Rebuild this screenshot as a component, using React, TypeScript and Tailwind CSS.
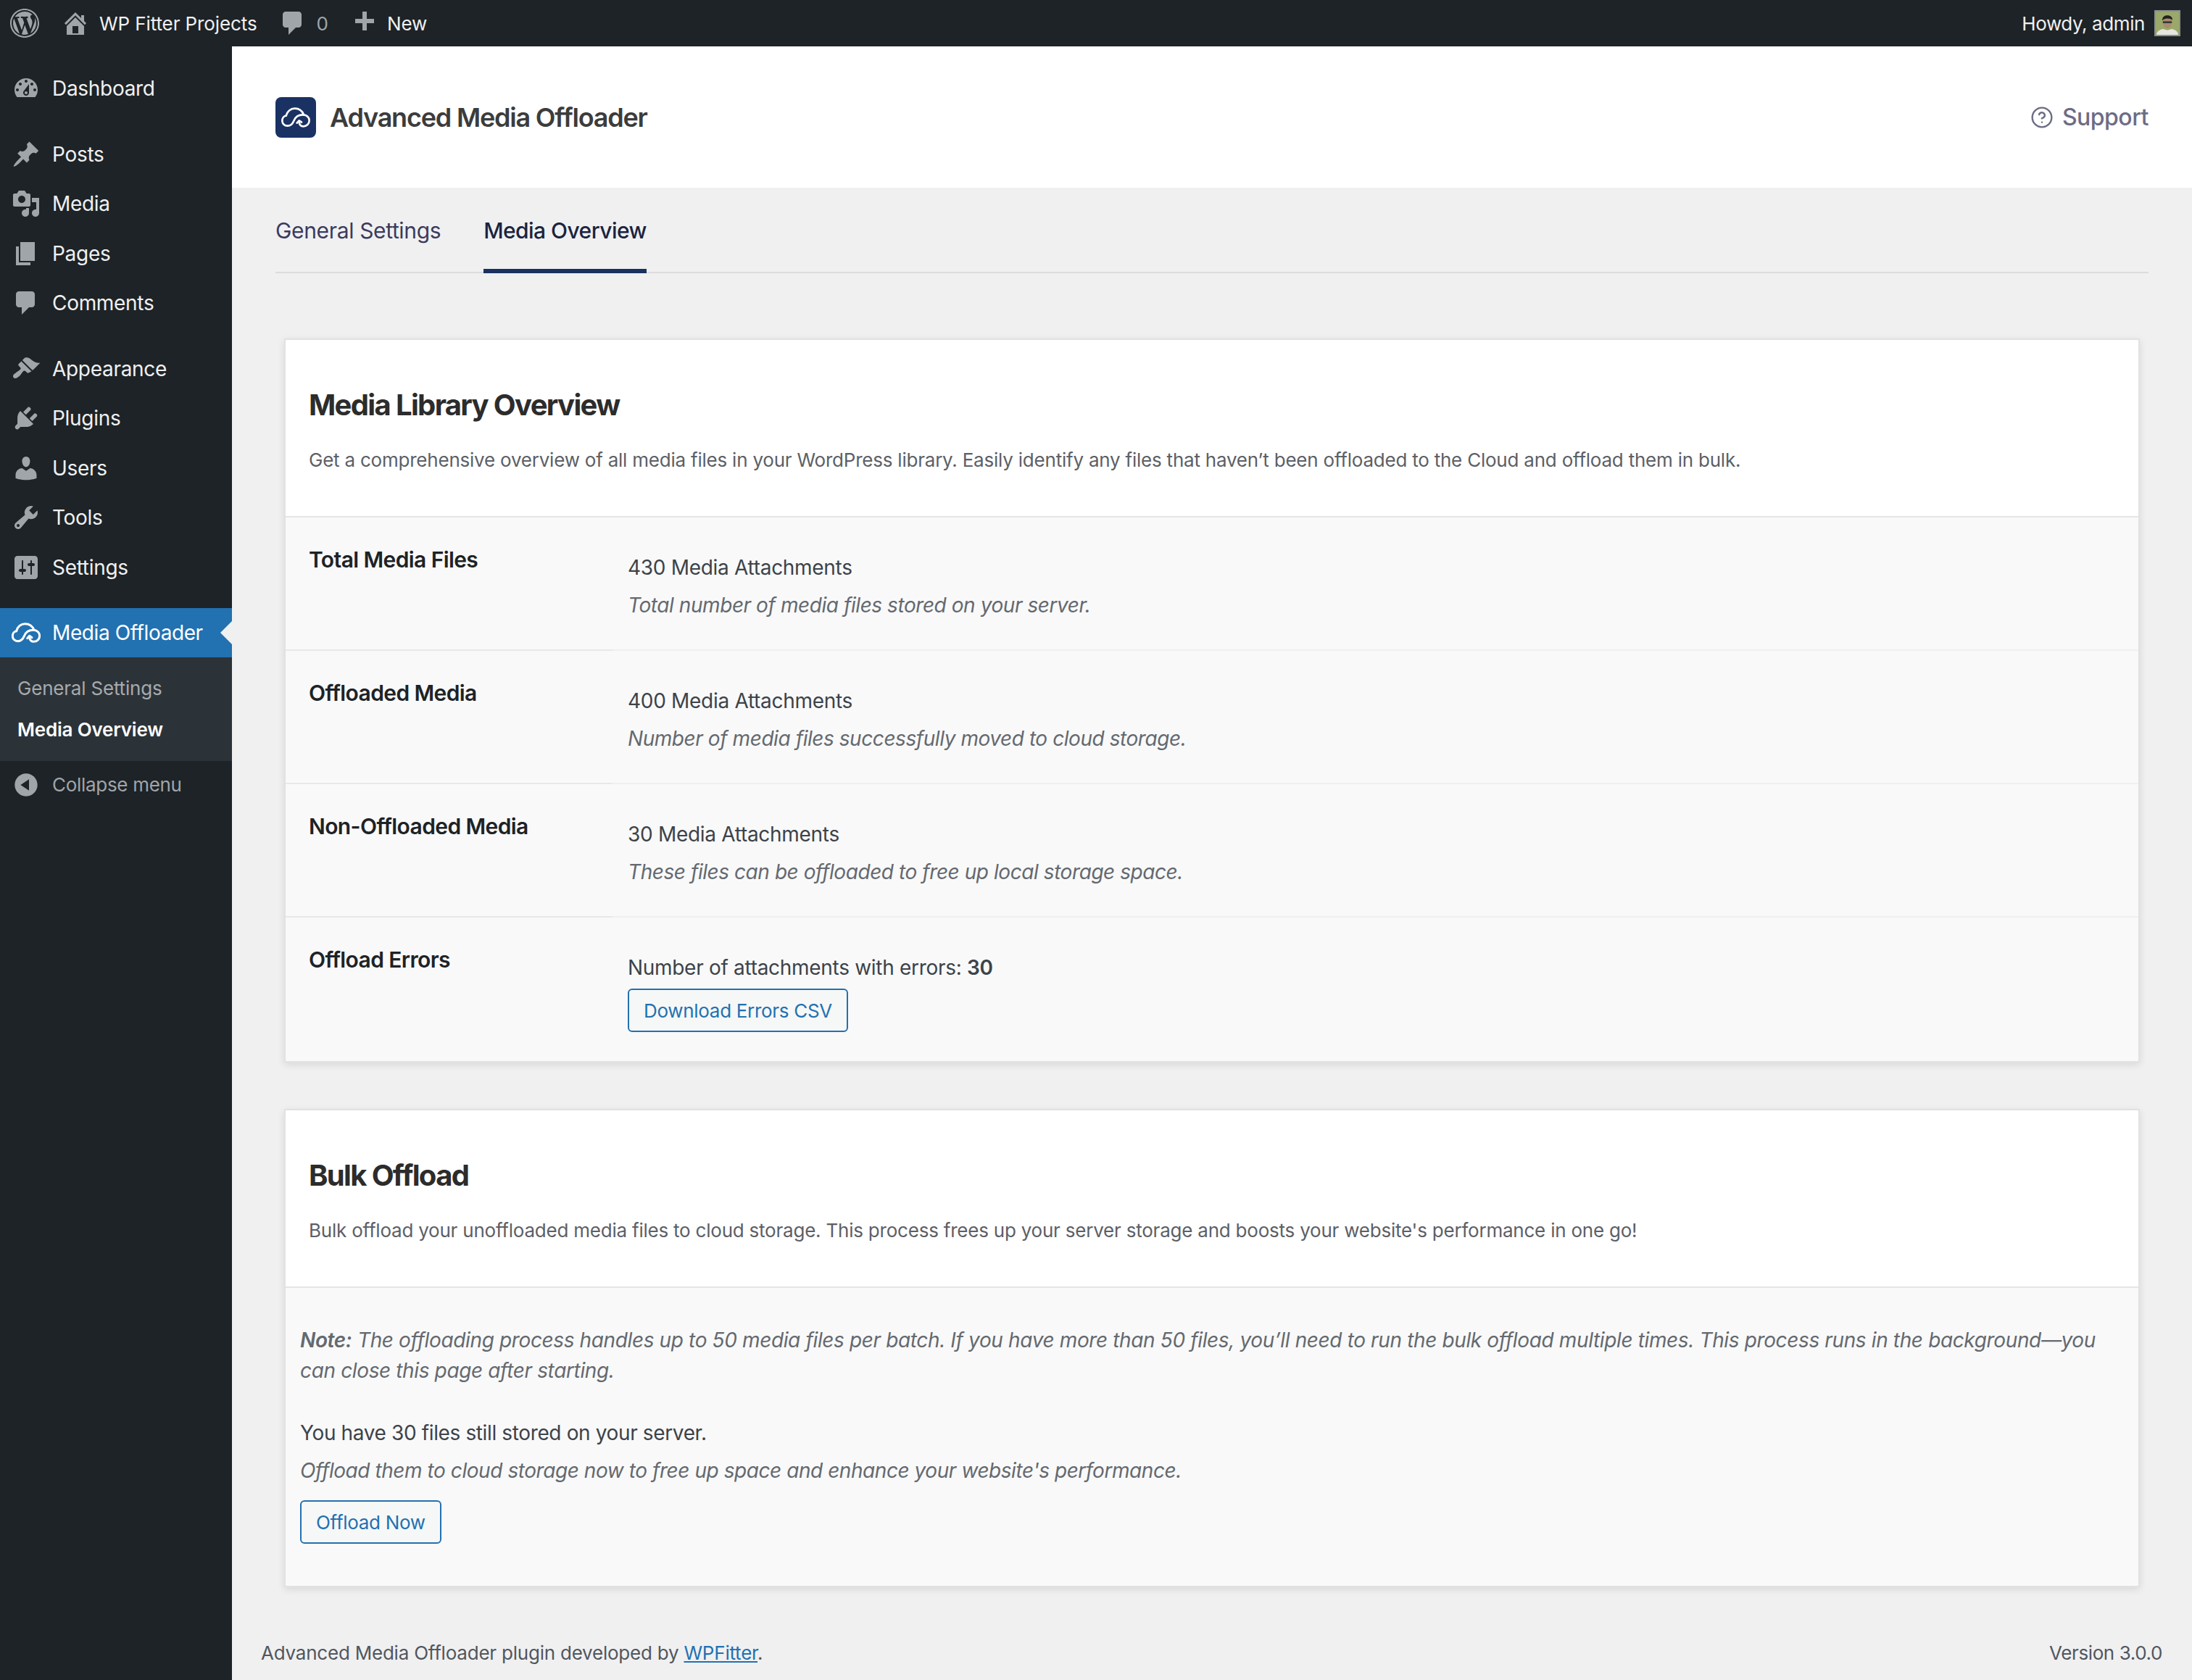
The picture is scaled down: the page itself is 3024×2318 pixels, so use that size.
import React from 'react';
import { CircleHelp } from 'lucide-react';

const paths: Record<string, string> = {
  wordpress: 'M20 10c0-5.52-4.48-10-10-10S0 4.48 0 10s4.48 10 10 10 10-4.48 10-10zM10 1.01c4.96 0 8.99 4.03 8.99 8.99s-4.03 8.99-8.99 8.99S1.01 14.96 1.01 10 5.04 1.01 10 1.01zM8.01 14.82L4.96 6.61c.49-.03 1.05-.08 1.05-.08.43-.05.38-1.01-.06-.99 0 0-1.29.1-2.13.1-.15 0-.33 0-.52-.01 1.44-2.17 3.9-3.6 6.7-3.6 2.09 0 3.99.79 5.41 2.09-.6-.08-1.45.35-1.45 1.42 0 .66.38 1.22.79 1.88.31.54.5 1.22.5 2.21 0 1.34-1.27 4.48-1.27 4.48l-2.71-7.5c.48-.03.75-.16.75-.16.43-.04.38-1.1-.05-1.08 0 0-1.3.11-2.14.11-.78 0-2.11-.11-2.11-.11-.43-.02-.48 1.06-.05 1.08l.84.08 1.12 3.04zm6.02 2.15L16.64 10s.67-1.69.39-3.81c.63 1.14.94 2.42.94 3.81 0 2.96-1.56 5.58-3.94 6.97zM2.68 6.77L6.5 17.25c-2.67-1.3-4.47-4.08-4.47-7.25 0-1.16.2-2.23.65-3.23zm7.45 4.53l2.29 6.25c-.75.27-1.57.42-2.42.42-.72 0-1.41-.11-2.06-.3z',
  home: 'M16 8.5l1.53 1.53-1.06 1.06L10 4.62l-6.47 6.47-1.06-1.06L10 2.5l4 4v-2h2v4zm-6-2.46l6 5.99V18H4v-5.97zM12 17v-5H8v5h4z',
  comment: 'M5 2h9c1.1 0 2 .9 2 2v7c0 1.1-.9 2-2 2h-2l-5 5v-5H5c-1.1 0-2-.9-2-2V4c0-1.1.9-2 2-2z',
  plus: 'M17 7v3h-5v5H9v-5H4V7h5V2h3v5h5z',
  dashboard: 'M3.76 16h12.48c1.1-1.37 1.76-3.11 1.76-5 0-4.42-3.58-8-8-8s-8 3.58-8 8c0 1.89.66 3.63 1.76 5zM10 4c.55 0 1 .45 1 1s-.45 1-1 1-1-.45-1-1 .45-1 1-1zM6 6c.55 0 1 .45 1 1s-.45 1-1 1-1-.45-1-1 .45-1 1-1zm8 0c.55 0 1 .45 1 1s-.45 1-1 1-1-.45-1-1 .45-1 1-1zm-5.37 5.55L12 7v6c0 1.1-.9 2-2 2s-2-.9-2-2c0-.57.24-1.08.63-1.45zM4 10c.55 0 1 .45 1 1s-.45 1-1 1-1-.45-1-1 .45-1 1-1zm12 0c.55 0 1 .45 1 1s-.45 1-1 1-1-.45-1-1 .45-1 1-1zm-5 3c0-.55-.45-1-1-1s-1 .45-1 1 .45 1 1 1 1-.45 1-1z',
  post: 'M10.44 3.02l1.82-1.82 6.36 6.35-1.83 1.82c-1.05-.68-2.48-.57-3.41.36l-.75.75c-.92.93-1.04 2.35-.35 3.41l-1.83 1.82-2.41-2.41-2.8 2.79c-.42.42-3.38 2.71-3.8 2.29s1.86-3.39 2.28-3.81l2.79-2.79L4.1 9.36l1.83-1.82c1.05.69 2.48.57 3.4-.36l.75-.75c.93-.92 1.05-2.35.36-3.41z',
  media: 'M13 11V4c0-.55-.45-1-1-1h-1.67L9 1H5L3.67 3H2c-.55 0-1 .45-1 1v7c0 .55.45 1 1 1h10c.55 0 1-.45 1-1zM7 4.5c1.38 0 2.5 1.12 2.5 2.5S8.38 9.5 7 9.5 4.5 8.38 4.5 7 5.62 4.5 7 4.5zM14 6h5v10.5c0 1.38-1.12 2.5-2.5 2.5S14 17.88 14 16.5s1.12-2.5 2.5-2.5c.17 0 .34.02.5.05V9h-3V6zm-4 8.05V13h2v3.5c0 1.38-1.12 2.5-2.5 2.5S7 17.88 7 16.5 8.12 14 9.5 14c.17 0 .34.02.5.05z',
  page: 'M6 15V2h10v13H6zm-1 1h8v2H3V5h2v11z',
  appearance: 'M14.48 11.06L7.41 3.99l1.5-1.5c.5-.56 2.3-.47 3.51.32 1.21.8 1.43 1.28 2.91 2.1 1.18.64 2.45 1.26 4.45.85zm-.71.71L6.7 4.7 4.93 6.47c-.39.39-.39 1.02 0 1.41l1.06 1.06c.39.39.39 1.03 0 1.42-.6.6-1.43 1.11-2.21 1.69-.35.26-.7.53-1.01.84C1.43 13.23.4 15.1 1.4 16.1c.99 1 2.87-.04 4.2-1.38.31-.31.58-.66.84-1.01.58-.78 1.09-1.61 1.69-2.21.39-.39 1.02-.39 1.41 0l1.06 1.06c.39.39 1.02.39 1.41 0z',
  plugins: 'M13.11 4.36L9.87 7.6 8 5.73l3.24-3.24c.35-.34 1.05-.2 1.56.32.52.51.66 1.21.31 1.55zm-8 1.77l.91-1.12 9.01 9.01-1.19.84c-.71.71-2.63 1.16-3.82 1.16H6.14L4.9 17.26c-.59.59-1.54.59-2.12 0-.59-.58-.59-1.53 0-2.12l1.24-1.24v-3.88c0-1.13.4-3.19 1.09-3.89zm7.26 3.97l3.24-3.24c.34-.35 1.04-.21 1.55.31.52.51.66 1.21.31 1.55l-3.24 3.25z',
  users: 'M10 9.25c-2.27 0-2.73-3.44-2.73-3.44C7 4.02 7.82 2 9.97 2c2.16 0 2.98 2.02 2.71 3.81 0 0-.41 3.44-2.68 3.44zm0 2.57L12.72 10c2.39 0 4.52 2.33 4.52 4.53v2.49s-3.65 1.13-7.24 1.13c-3.65 0-7.24-1.13-7.24-1.13v-2.49c0-2.25 1.94-4.48 4.47-4.48z',
  tools: 'M16.68 9.77c-1.34 1.34-3.3 1.67-4.95.99l-5.41 6.52c-.99.99-2.59.99-3.58 0s-.99-2.59 0-3.57l6.52-5.42c-.68-1.65-.35-3.61.99-4.95 1.28-1.28 3.12-1.62 4.72-1.06l-2.89 2.89 2.82 2.82 2.86-2.87c.53 1.58.18 3.39-1.08 4.65zM3.81 16.21c.4.39 1.04.39 1.43 0 .4-.4.4-1.04 0-1.43-.39-.4-1.03-.4-1.43 0-.39.39-.39 1.03 0 1.43z',
  settings: 'M18 16V4c0-1.1-.9-2-2-2H4c-1.1 0-2 .9-2 2v12c0 1.1.9 2 2 2h12c1.1 0 2-.9 2-2zM8 11h1c.55 0 1 .45 1 1s-.45 1-1 1H8v1.5c0 .28-.22.5-.5.5s-.5-.22-.5-.5V13H6c-.55 0-1-.45-1-1s.45-1 1-1h1V5.5c0-.28.22-.5.5-.5s.5.22.5.5V11zm5-2h-1c-.55 0-1-.45-1-1s.45-1 1-1h1V5.5c0-.28.22-.5.5-.5s.5.22.5.5V7h1c.55 0 1 .45 1 1s-.45 1-1 1h-1v5.5c0 .28-.22.5-.5.5s-.5-.22-.5-.5V9z',
  collapse: 'M10 2.16c4.33 0 7.84 3.51 7.84 7.84s-3.51 7.84-7.84 7.84S2.16 14.33 2.16 10 5.71 2.16 10 2.16zm2 11.72V6.12L6.18 9.97z',
};

const Dashicon = ({ name, className }: { name: string; className?: string }) => (
  <svg viewBox="0 0 20 20" fill="currentColor" className={className}>
    <path d={paths[name]} />
  </svg>
);

const CloudIcon = ({ className, strokeWidth = 8 }: { className?: string; strokeWidth?: number }) => (
  <svg viewBox="34 50 120 82" fill="none" stroke="currentColor" strokeWidth={strokeWidth} strokeLinecap="round" strokeLinejoin="round" className={className}>
    <path d="M54 84C44 85 38 95 38 105C38 117 48 126 60 126C73 126 81 117 86 105C91 92 102 80 124 80C140 80 150 91 150 104C150 118 139 128 125 128C116 128 110 122 108 112" />
    <path d="M54 84C58 66 73 54 90 54C106 54 120 62 127 80" />
    <path d="M99 114L108 104L118 111" />
  </svg>
);

const Avatar = () => (
  <svg viewBox="0 0 36 36" className="w-9 h-9 border-2 border-[#8c8f94] bg-[#97a765]">
    <rect width="36" height="36" fill="#9aa86a" />
    <path d="M1 36c1-7 7-8 10-9l7 2 7-2c3 1 9 2 10 9z" fill="#e6e6e0" />
    <ellipse cx="18" cy="17" rx="7" ry="9" fill="#a98c70" />
    <path d="M10 14c0-6 4-8 8-8s8 2 8 7c-3-2-7-3-10-2-2 0-4 1-6 3z" fill="#23211e" />
    <rect x="11" y="15" width="14" height="3" fill="#3a3a38" />
  </svg>
);

const menuTop = [
  [['dashboard', 'Dashboard']],
  [['post', 'Posts'], ['media', 'Media'], ['page', 'Pages'], ['comment', 'Comments']],
  [['appearance', 'Appearance'], ['plugins', 'Plugins'], ['users', 'Users'], ['tools', 'Tools'], ['settings', 'Settings']],
];

const Sidebar = () => (
  <aside className="w-[320px] shrink-0 bg-[#1d2327] pt-6 flex flex-col gap-[22px] text-[28px] tracking-[-0.3px] text-[#f0f0f1]">
    {menuTop.map((group, i) => (
      <div key={i}>
        {group.map(([icon, label]) => (
          <div key={label} className="h-[68.5px] flex items-center pl-4 gap-4">
            <Dashicon name={icon} className="w-10 h-10 text-[#a0a5aa]" />
            <span>{label}</span>
          </div>
        ))}
      </div>
    ))}
    <div>
      <div className="relative h-[68px] bg-[#2271b1] text-white flex items-center pl-4 gap-4">
        <CloudIcon className="w-10 h-[28px] text-white" strokeWidth={9} />
        <span className="tracking-[-0.4px]">Media Offloader</span>
        <div className="absolute right-0 top-[18px] w-0 h-0 border-y-[16px] border-y-transparent border-r-[16px] border-r-[#f0f0f1]" />
      </div>
      <div className="h-[143px] bg-[#2c3338] pl-6 pt-[14px] text-[26px] tracking-[-0.2px] flex flex-col">
        <div className="h-[57px] flex items-center text-[#a7aaad]">General Settings</div>
        <div className="h-[57px] flex items-center text-white font-semibold">Media Overview</div>
      </div>
      <div className="h-[65px] flex items-center pl-4 gap-4 text-[26px] text-[#a0a5aa]">
        <Dashicon name="collapse" className="w-10 h-10" />
        <span>Collapse menu</span>
      </div>
    </div>
  </aside>
);

const TopBar = () => (
  <header className="h-16 shrink-0 bg-[#1d2327] flex items-center text-[26px] tracking-[-0.1px] text-[#f0f0f1]">
    <Dashicon name="wordpress" className="ml-[14px] w-10 h-10 text-[#a0a5aa]" />
    <Dashicon name="home" className="ml-[30px] w-10 h-10 text-[#a0a5aa]" />
    <span className="ml-[13px]">WP Fitter Projects</span>
    <Dashicon name="comment" className="ml-[29px] w-10 h-10 text-[#a0a5aa]" />
    <span className="ml-[13px] text-[#a0a5aa]">0</span>
    <Dashicon name="plus" className="ml-[29px] w-10 h-10 text-[#a0a5aa]" />
    <span className="ml-3">New</span>
    <span className="ml-auto mr-[13px] tracking-[-0.4px]">Howdy, admin</span>
    <div className="mr-4"><Avatar /></div>
  </header>
);

const Row = ({ label, children, last }: { label: string; children: React.ReactNode; last?: boolean }) => (
  <div className={`flex ${last ? 'h-[198px]' : 'h-[184px]'}`}>
    <div className={`w-[451px] shrink-0 pl-8 pt-[38px] leading-10 text-[30px] tracking-[-0.6px] font-semibold text-[#1d2327] ${last ? '' : 'border-b-2 border-[#e8e8e8]'}`}>{label}</div>
    <div className={`flex-1 pl-[21px] pt-[49px] text-[28px] tracking-[-0.3px] text-[#3c434a] ${last ? '' : 'border-b-2 border-[#f0f0f0]'}`}>{children}</div>
  </div>
);

const Line = ({ children }: { children: React.ReactNode }) => <p className="leading-10">{children}</p>;
const Desc = ({ children }: { children: React.ReactNode }) => <p className="mt-3 leading-10 italic tracking-[-0.44px] text-[#646970]">{children}</p>;
const Button = ({ children, className }: { children: React.ReactNode; className?: string }) => (
  <button className={`h-[60px] px-5 rounded-md border-2 border-[#2271b1] bg-[#f6f7f7] text-[26px] tracking-[-0.3px] text-[#2271b1] ${className}`}>{children}</button>
);

const CardHead = ({ title, text }: { title: string; text: string }) => (
  <div className="pl-8 pt-[65px] pb-[57px] border-b-2 border-[#e5e5e5] bg-white">
    <h2 className="text-[40px] leading-[50px] tracking-[-1.65px] font-bold text-[#2c2c2c]">{title}</h2>
    <p className="mt-[31px] leading-10 text-[26px] tracking-[-0.22px] text-[#5c6066]">{text}</p>
  </div>
);

const Card = ({ children, className }: { children: React.ReactNode; className?: string }) => (
  <section className={`mx-[72px] border-2 border-[#e2e2e2] bg-[#f9f9f9] shadow-[0_3px_10px_rgba(0,0,0,0.1)] ${className}`}>{children}</section>
);

export default function App() {
  return (
    <div className="w-[3024px] h-[2318px] overflow-hidden flex flex-col bg-[#f0f0f1] font-['Inter',sans-serif]">
      <TopBar />
      <div className="flex flex-1">
        <Sidebar />
        <main className="flex-1 flex flex-col">
          <div className="h-[195px] shrink-0 bg-white px-[60px] flex items-center">
            <div className="w-14 h-14 rounded-lg bg-[#1a3263] flex items-center justify-center text-white">
              <CloudIcon className="w-[40px] h-[28px]" />
            </div>
            <h1 className="ml-[19px] text-[36px] tracking-[-1.2px] font-semibold text-[#3c3c3c]">Advanced Media Offloader</h1>
            <div className="ml-auto flex items-center gap-3 text-[32px] tracking-[-0.5px] font-medium text-[#6c6c85]">
              <CircleHelp className="w-8 h-8" strokeWidth={1.8} />
              <span>Support</span>
            </div>
          </div>

          <div className="mx-[60px] h-[118px] shrink-0 flex gap-[59px] border-b-2 border-[#dcdcdf] text-[30px]">
            <div className="pt-[38px] leading-[42px] tracking-[-0.35px] text-[#3b3b5c]">General Settings</div>
            <div className="h-[118px] pt-[38px] leading-[42px] tracking-[-0.55px] font-medium text-[#1a2340] border-b-[6px] border-[#1a3160]">Media Overview</div>
          </div>

          <Card className="mt-[90px]">
            <CardHead title="Media Library Overview" text="Get a comprehensive overview of all media files in your WordPress library. Easily identify any files that haven’t been offloaded to the Cloud and offload them in bulk." />
            <Row label="Total Media Files">
              <Line>430 Media Attachments</Line>
              <Desc>Total number of media files stored on your server.</Desc>
            </Row>
            <Row label="Offloaded Media">
              <Line>400 Media Attachments</Line>
              <Desc>Number of media files successfully moved to cloud storage.</Desc>
            </Row>
            <Row label="Non-Offloaded Media">
              <Line>30 Media Attachments</Line>
              <Desc>These files can be offloaded to free up local storage space.</Desc>
            </Row>
            <Row label="Offload Errors" last>
              <Line>Number of attachments with errors: <strong className="font-semibold">30</strong></Line>
              <Button className="mt-[9px]">Download Errors CSV</Button>
            </Row>
          </Card>

          <Card className="mt-16">
            <CardHead title="Bulk Offload" text="Bulk offload your unoffloaded media files to cloud storage. This process frees up your server storage and boosts your website's performance in one go!" />
            <div className="pl-5 pr-10 pt-[51px] pb-[58px] text-[28px] tracking-[-0.33px] text-[#3c434a]">
              <p className="leading-[42px] italic tracking-[-0.37px] text-[#646970]"><strong className="font-semibold">Note:</strong> The offloading process handles up to 50 media files per batch. If you have more than 50 files, you’ll need to run the bulk offload multiple times. This process runs in the background—you can close this page after starting.</p>
              <p className="mt-[45px] leading-10 tracking-[-0.37px]">You have 30 files still stored on your server.</p>
              <Desc>Offload them to cloud storage now to free up space and enhance your website's performance.</Desc>
              <Button className="mt-[21px]">Offload Now</Button>
            </div>
          </Card>

          <footer className="mt-auto pl-10 pr-[41px] pb-[17px] flex justify-between text-[26px] leading-10 tracking-[-0.22px] text-[#50575e]">
            <p>Advanced Media Offloader plugin developed by <a href="#" className="text-[#2271b1] underline">WPFitter</a>.</p>
            <p className="tracking-[-0.4px]">Version 3.0.0</p>
          </footer>
        </main>
      </div>
    </div>
  );
}
